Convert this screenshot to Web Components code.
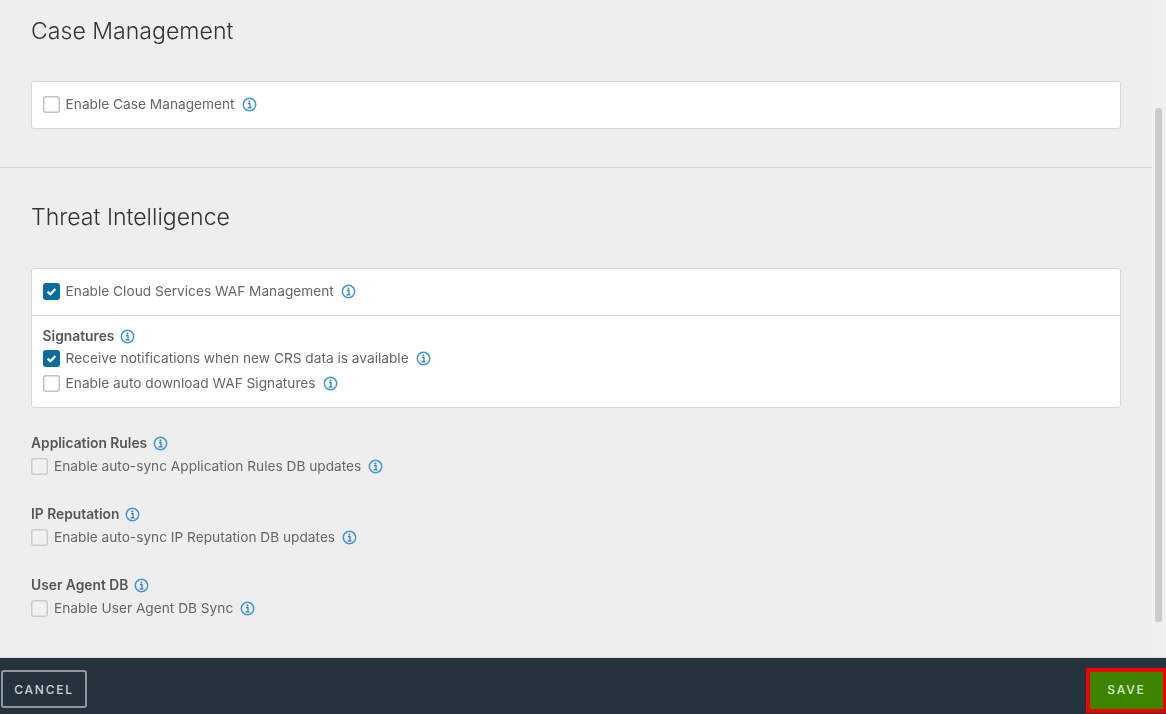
<!DOCTYPE html>
<html>
<head>
<meta charset="utf-8">
<title>Settings</title>
<style>
  html, body { margin: 0; height: 100%; }
  body { font-family: "Inter", "Liberation Sans", sans-serif; background: #eeeeee; overflow: hidden; }
</style>
</head>
<body>
<settings-page>
  <settings-section title="Case Management" ruled style="--title-top: 16px; --title-gap: 35px; --section-end: 38px">
    <settings-card>
      <card-row style="--pad: 12px 11px 13px 10.6px"><check-field>Enable Case Management</check-field></card-row>
    </settings-card>
  </settings-section>

  <settings-section title="Threat Intelligence" style="--title-top: 34px; --title-gap: 36px">
    <settings-card>
      <card-row style="--pad: 12px 11px 13px 10.6px; --line: 1px solid #d7d7d7"><check-field checked>Enable Cloud Services WAF Management</check-field></card-row>
      <card-row style="--pad: 10px 11px 13px 10.6px">
        <field-label style="margin-bottom: 1px">Signatures</field-label>
        <check-field checked>Receive notifications when new CRS data is available</check-field>
        <check-field style="margin-top: 4px">Enable auto download WAF Signatures</check-field>
      </card-row>
    </settings-card>

    <field-group>
      <field-label>Application Rules</field-label>
      <check-field muted>Enable auto-sync Application Rules DB updates</check-field>
    </field-group>
    <field-group>
      <field-label>IP Reputation</field-label>
      <check-field muted>Enable auto-sync IP Reputation DB updates</check-field>
    </field-group>
    <field-group>
      <field-label>User Agent DB</field-label>
      <check-field muted>Enable User Agent DB Sync</check-field>
    </field-group>
  </settings-section>

  <footer-bar slot="footer">
    <footer-button>CANCEL</footer-button>
    <footer-button primary>SAVE</footer-button>
  </footer-bar>
</settings-page>

<script>
const FONT = `"Inter", "Liberation Sans", sans-serif`;

/**
 * Small helper, every element here is just a template in an open shadow root.
 * @param $elem
 * @param html
 */
function mount($elem, html) {
  const $template = document.createElement("template");
  $template.innerHTML = html;
  $elem.attachShadow({ mode: "open" }).appendChild($template.content.cloneNode(true));
}

class InfoIcon extends HTMLElement {
  constructor() {
    super();
    mount(this, `
      <style>
        :host { display: inline-flex; width: 15px; height: 15px; flex: none; }
        svg { display: block; }
      </style>
      <svg width="15" height="15" viewBox="0 0 15 15" fill="none">
        <circle cx="7.5" cy="7.5" r="6.2" stroke="#3d9bd3" stroke-width="1.5"/>
        <circle cx="7.4" cy="4.5" r="1" fill="#2f7fb0"/>
        <path d="M6 6.7h2v3.9M5.6 10.8h3.8" stroke="#2f7fb0" stroke-width="1.2"/>
      </svg>
    `);
  }
}

class CheckField extends HTMLElement {
  constructor() {
    super();
    const checked = this.hasAttribute("checked");
    mount(this, `
      <style>
        :host {
          display: flex;
          align-items: center;
          height: 21px;
          font: 400 13.7px/21px ${FONT};
          color: #666;
        }
        .box {
          box-sizing: border-box;
          width: 17px;
          height: 17px;
          margin-right: 6px;
          border-radius: 3px;
          background: #fff;
          box-shadow: inset 0 0 0 1.5px #c2c2c2;
          flex: none;
        }
        :host([muted]) .box { background: #f1f1f1; box-shadow: inset 0 0 0 1.5px #cbcbcb; }
        .box.on { background: #0a6d9e; box-shadow: none; padding: 1px; }
        .box svg { display: block; }
        info-icon { margin-left: 7px; }
      </style>
      <span class="box ${checked ? "on" : ""}">
        ${checked ? `<svg width="15" height="15" viewBox="0 0 15 15" fill="none"><path d="M3.6 7.6l2.8 2.6 5-5.2" stroke="#fff" stroke-width="2.2"/></svg>` : ""}
      </span>
      <slot></slot>
      <info-icon></info-icon>
    `);
  }
}

class FieldLabel extends HTMLElement {
  constructor() {
    super();
    mount(this, `
      <style>
        :host {
          display: flex;
          align-items: center;
          height: 21px;
          font: 600 13.8px/21px ${FONT};
          color: #565656;
        }
        info-icon { margin-left: 6px; }
      </style>
      <slot></slot>
      <info-icon></info-icon>
    `);
  }
}

class FieldGroup extends HTMLElement {
  constructor() {
    super();
    mount(this, `
      <style>
        :host { display: flex; flex-direction: column; gap: 2px; margin-top: 27px; }
        :host(:first-of-type) { margin-top: 25px; }
      </style>
      <slot></slot>
    `);
  }
}

class CardRow extends HTMLElement {
  constructor() {
    super();
    mount(this, `
      <style>
        :host {
          display: block;
          padding: var(--pad, 12px);
          border-bottom: var(--line, 0);
        }
      </style>
      <slot></slot>
    `);
  }
}

class SettingsCard extends HTMLElement {
  constructor() {
    super();
    mount(this, `
      <style>
        :host {
          display: block;
          width: 1088px;
          background: #fff;
          border: 1px solid #d7d7d7;
          border-radius: 3px;
        }
      </style>
      <slot></slot>
    `);
  }
}

class SettingsSection extends HTMLElement {
  constructor() {
    super();
    mount(this, `
      <style>
        :host {
          display: block;
          box-sizing: border-box;
          width: 1152px;
          padding: 0 31px var(--section-end, 0);
        }
        :host([ruled]) { border-bottom: 1px solid #d4d4d4; }
        h2 {
          margin: var(--title-top, 15px) 0 var(--title-gap, 36px);
          font: 300 23.1px/30px ${FONT};
          color: #333;
        }
      </style>
      <h2>${this.getAttribute("title")}</h2>
      <slot></slot>
    `);
  }
}

class FooterButton extends HTMLElement {
  constructor() {
    super();
    mount(this, `
      <style>
        :host {
          box-sizing: border-box;
          display: inline-flex;
          align-items: center;
          justify-content: center;
          height: 38px;
          width: 86px;
          padding-top: 2px;
          border: 2px solid #8e999f;
          border-radius: 3px;
          font: 500 12px/1 ${FONT};
          letter-spacing: 1.8px;
          color: #ccd2d6;
        }
        :host([primary]) {
          width: 73px;
          height: 37px;
          margin-top: 3px;
          padding: 0 0 2px;
          background: #3c8500;
          border: 0;
          border-radius: 0;
          color: #dce8cf;
          /* the red box is an annotation on the shot */
          outline: 4px solid #f00000;
        }
      </style>
      <slot></slot>
    `);
  }
}

class FooterBar extends HTMLElement {
  constructor() {
    super();
    mount(this, `
      <style>
        :host {
          display: flex;
          align-items: center;
          justify-content: space-between;
          height: 57px;
          padding: 6px 3px 0 1px;
          box-sizing: border-box;
          background: #25333d;
          border-top: 1px solid #dcdcdc;
        }
      </style>
      <slot></slot>
    `);
  }
}

class SettingsPage extends HTMLElement {
  constructor() {
    super();
    mount(this, `
      <style>
        :host {
          display: flex;
          flex-direction: column;
          height: 714px;
          position: relative;
          /* the shot is a soft, rescaled capture */
          filter: blur(0.35px);
        }
        .scroll { flex: 1; min-height: 0; overflow: hidden; }
        .track {
          position: absolute;
          left: 1152px;
          top: 0;
          right: 0;
          height: 657px;
          background: #f0f0f0;
        }
        .thumb {
          position: absolute;
          left: 1155px;
          top: 108px;
          width: 7px;
          height: 514px;
          border-radius: 3px;
          background: #cbcbcb;
        }
      </style>
      <div class="scroll"><slot></slot></div>
      <div class="track"></div>
      <div class="thumb"></div>
      <slot name="footer"></slot>
    `);
  }
}

// Define the leaves first so the parents find them upgraded.
customElements.define("info-icon", InfoIcon);
customElements.define("check-field", CheckField);
customElements.define("field-label", FieldLabel);
customElements.define("field-group", FieldGroup);
customElements.define("card-row", CardRow);
customElements.define("settings-card", SettingsCard);
customElements.define("settings-section", SettingsSection);
customElements.define("footer-button", FooterButton);
customElements.define("footer-bar", FooterBar);
customElements.define("settings-page", SettingsPage);
</script>
</body>
</html>
